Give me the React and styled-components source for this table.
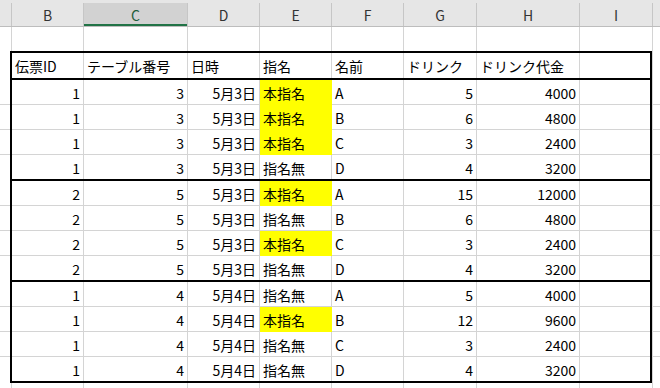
import React from 'react'
import styled, { createGlobalStyle } from 'styled-components'

const GRID = '#d4d4d4'
const FONT = '"Noto Sans CJK JP", "Noto Sans", sans-serif'

const GlobalStyle = createGlobalStyle`
  html, body {
    margin: 0;
    padding: 0;
    background: #ffffff;
  }
`

const Sheet = styled.div`
  width: 660px;
  height: 388px;
  overflow: hidden;
  background: #ffffff;
  font-family: ${FONT};
  color: #000;
`

const ColumnBar = styled.div`
  display: flex;
  height: 27px;
  box-sizing: border-box;
  padding-top: 3px;
  background: #e6e6e6;
  border-bottom: 1px solid #bdbdbd;
`

const ColHead = styled.div`
  flex: ${p => (p.$w ? `0 0 ${p.$w}px` : '1 1 auto')};
  box-sizing: border-box;
  display: flex;
  align-items: center;
  justify-content: center;
  border-right: ${p => (p.$w ? '1px solid #c6c6c6' : 'none')};
  background: ${p => (p.$active ? '#d2d2d2' : 'transparent')};
  box-shadow: ${p => (p.$active ? 'inset 0 -2px 0 #217346' : 'none')};
  color: ${p => (p.$active ? '#1f5e3a' : '#333')};
  font-size: 14px;
  line-height: 1;
`

const PlainRow = styled.div`
  display: flex;
  height: ${p => p.$h}px;
`

const PlainCell = styled.div`
  flex: ${p => (p.$w ? `0 0 ${p.$w}px` : '1 1 auto')};
  box-sizing: border-box;
  border-right: ${p => (p.$w ? `1px solid ${GRID}` : 'none')};
`

const TableRow = styled.div`
  display: flex;
`

const Gutter = styled.div`
  flex: 0 0 10px;
  box-sizing: border-box;
  border-bottom: ${p => (p.$line ? `1px solid ${GRID}` : 'none')};
`

const Tail = styled.div`
  flex: 1 1 auto;
  box-sizing: border-box;
  border-bottom: ${p => (p.$line ? `1px solid ${GRID}` : 'none')};
  border-left: 1px solid ${GRID};
`

const Section = styled.div`
  display: grid;
  grid-template-columns: 72px 104px 72px 72px 72px 73px 103px 70px;
  border-left: 2px solid #000;
  border-right: 2px solid #000;
  border-top: ${p => (p.$top ? '2px solid #000' : 'none')};
  border-bottom: ${p => (p.$end ? '2px solid #000' : 'none')};
`

const Cell = styled.div`
  box-sizing: border-box;
  height: ${p => p.$h}px;
  display: flex;
  align-items: center;
  justify-content: ${p => (p.$right ? 'flex-end' : 'flex-start')};
  padding: 1px 3px 0 3px;
  font-size: 14px;
  line-height: 1;
  white-space: nowrap;
  background: ${p => (p.$fill ? '#ffff00' : 'transparent')};
  border-right: ${p => (p.$last ? 'none' : `1px solid ${p.$fill ? '#ffff00' : GRID}`)};
  border-bottom: ${p => (p.$end ? 'none' : `1px solid ${p.$fill ? '#ffff00' : GRID}`)};
`

const headWidths = [12, 72, 104, 72, 72, 72, 73, 103, 73]
const letters = ['', 'B', 'C', 'D', 'E', 'F', 'G', 'H', 'I']

const headers = ['伝票ID', 'テーブル番号', '日時', '指名', '名前', 'ドリンク', 'ドリンク代金', '']

const rows = [
  [1, 3, '5月3日', '本指名', 'A', 5, 4000],
  [1, 3, '5月3日', '本指名', 'B', 6, 4800],
  [1, 3, '5月3日', '本指名', 'C', 3, 2400],
  [1, 3, '5月3日', '指名無', 'D', 4, 3200],
  [2, 5, '5月3日', '本指名', 'A', 15, 12000],
  [2, 5, '5月3日', '指名無', 'B', 6, 4800],
  [2, 5, '5月3日', '本指名', 'C', 3, 2400],
  [2, 5, '5月3日', '指名無', 'D', 4, 3200],
  [1, 4, '5月4日', '指名無', 'A', 5, 4000],
  [1, 4, '5月4日', '本指名', 'B', 12, 9600],
  [1, 4, '5月4日', '指名無', 'C', 3, 2400],
  [1, 4, '5月4日', '指名無', 'D', 4, 3200],
]

// right aligned columns: B, C, D, G, H
const rightCols = [true, true, true, false, false, true, true, false]

const BlankRow = ({ h }) => (
  <PlainRow $h={h}>
    {headWidths.map((w, i) => (
      <PlainCell key={i} $w={w} />
    ))}
    <PlainCell />
  </PlainRow>
)

const App = () => (
  <>
    <GlobalStyle />
    <Sheet>
      <ColumnBar>
        {letters.map((l, i) => (
          <ColHead key={i} $w={headWidths[i]} $active={l === 'C'}>
            {l}
          </ColHead>
        ))}
        <ColHead />
      </ColumnBar>

      <BlankRow h={24} />

      <TableRow>
        <Gutter />
        <Section $top $end>
          {headers.map((t, i) => (
            <Cell key={i} $h={25} $end $last={i === 7}>
              {t}
            </Cell>
          ))}
        </Section>
        <Tail />
      </TableRow>

      {rows.map((r, ri) => {
        const end = ri % 4 === 3
        const cells = [...r, '']
        return (
          <TableRow key={ri}>
            <Gutter $line={!end} />
            <Section $end={end}>
              {cells.map((v, i) => (
                <Cell
                  key={i}
                  $h={end ? 24 : 25}
                  $end={end}
                  $right={rightCols[i]}
                  $last={i === 7}
                  $fill={i === 3 && v === '本指名'}
                >
                  {v}
                </Cell>
              ))}
            </Section>
            <Tail $line={!end} />
          </TableRow>
        )
      })}

      <BlankRow h={25} />
    </Sheet>
  </>
)

export default App
